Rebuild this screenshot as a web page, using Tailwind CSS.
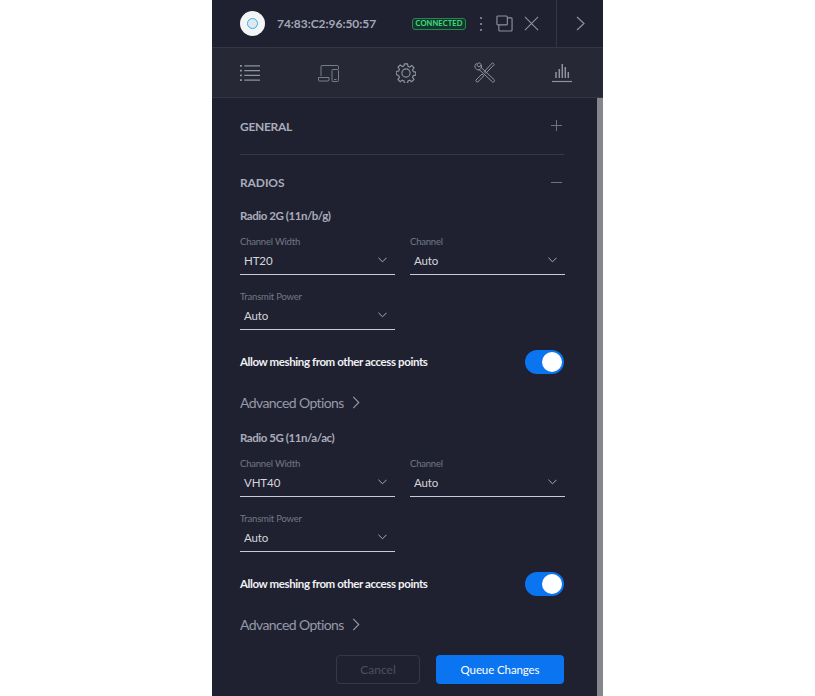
<!DOCTYPE html>
<html lang="en">
<head>
  <meta charset="UTF-8">
  <title>Device settings</title>
  <script src="https://cdn.jsdelivr.net/npm/@tailwindcss/browser@4"></script>
</head>
<body class="bg-white h-[696px] overflow-hidden font-['Lato',sans-serif]">
  <div class="ml-[212px] w-[391px] h-[696px] bg-[#1f2130] flex flex-col overflow-hidden">

    <!-- Header -->
    <div class="h-[48px] shrink-0 flex items-center border-b border-[#343645]">
      <div class="w-[25px] h-[25px] ml-[28px] rounded-full bg-[#f3f4f5] flex items-center justify-center">
        <div class="w-[11px] h-[11px] rounded-full border border-[#35b0e8] bg-[#dfe8ee]"></div>
      </div>
      <span class="ml-[12px] w-[124px] text-[12px] font-bold tracking-[-0.05px] text-[#a4a7b5]">74:83:C2:96:50:57</span>
      <span class="ml-[11px] mt-[1px] h-[12px] w-[54px] flex items-center justify-center rounded-[3px] border border-[#1f8a4c] bg-[#16352f] text-[7.5px] font-bold tracking-[0.1px] text-[#3fe07f]">CONNECTED</span>
      <svg class="ml-[13px]" width="4" height="16" viewBox="0 0 4 16" fill="#8d909e"><circle cx="2" cy="2" r="1.1"/><circle cx="2" cy="8" r="1.1"/><circle cx="2" cy="14" r="1.1"/></svg>
      <svg class="ml-[13px]" width="17" height="17" viewBox="0 0 18 18" fill="none" stroke="#8d909e" stroke-width="1.2"><rect x="1" y="1" width="11" height="9.5" rx="1"/><path d="M12 3h4a1 1 0 0 1 1 1v12a1 1 0 0 1-1 1H4a1 1 0 0 1-1-1v-5.500"/></svg>
      <svg class="ml-[11px]" width="15" height="15" viewBox="0 0 16 16" fill="none" stroke="#8d909e" stroke-width="1.2"><path d="M1 1l14 14M15 1L1 15"/></svg>
      <div class="ml-[17px] h-full w-px bg-[#343645]"></div>
      <svg class="ml-[19px]" width="9" height="15" viewBox="0 0 9 15" fill="none" stroke="#8d909e" stroke-width="1.2"><path d="M1 1l7 6.500L1 14"/></svg>
    </div>

    <!-- Tabs -->
    <div class="h-[50px] shrink-0 flex items-center bg-[#262836] border-b border-[#343645] text-[#8f92a0]">
      <svg class="ml-[28px]" width="20" height="18" viewBox="0 0 21 18" fill="none" stroke="currentColor" stroke-width="1.2"><path d="M4.500 1.500H21M4.500 6.500H21M4.500 11.500H21M4.500 16.500H21"/><path stroke-width="2" d="M0 1.500h2M0 6.500h2M0 11.500h2M0 16.500h2"/></svg>
      <svg class="ml-[58px]" width="21" height="18" viewBox="0 0 21 18" fill="none" stroke="currentColor" stroke-width="1" stroke-opacity=".8"><path d="M3 12V2.500a1 1 0 0 1 1-1h15.500a1 1 0 0 1 1 1V5"/><path d="M0.500 13.500H11v2.500a1 1 0 0 1-1 1H1.500a1 1 0 0 1-1-1z"/><rect x="14" y="5.500" width="6.500" height="12" rx="1"/><path d="M16 15.500h2.500"/></svg>
      <svg class="ml-[57px]" width="20" height="20" viewBox="0 0 22 22" fill="none" stroke="currentColor" stroke-width="1.3"><circle cx="11" cy="11" r="4.500"/><path d="M9.300 1h3.400l.5 2.700 1.900.8 2.300-1.600 2.400 2.400-1.600 2.300.8 1.900 2.700.5v3.400l-2.700.5-.8 1.900 1.600 2.300-2.400 2.400-2.300-1.600-1.900.8-.5 2.700H9.300l-.5-2.700-1.900-.8-2.300 1.600-2.400-2.400 1.600-2.300-.8-1.900L.300 12.700V9.300L3 8.800l.8-1.900-1.600-2.300 2.400-2.400 2.300 1.600 1.900-.8z"/></svg>
      <svg class="ml-[58px]" width="21" height="21" viewBox="0 0 21 21" fill="none" stroke="currentColor" stroke-width="1"><path d="M4.500 .8L2.800 3 4.800 5 7 3.300C7.800 5.500 6.800 7.800 4.600 7.800L5.500 7.800 18.500 20A1.500 1.500 0 0 0 20.300 17.800L7.500 5.800C7.800 2.800 6.500 .8 4.500 .8zM2.800 1.300C.8 2.300.2 4.800 1.700 6.500 2.800 7.800 4.200 8 5.500 7.800"/><path d="M18.500 .8L20.300 2.500 11.800 11.300 10.200 9.700zM8 12L2 18a1.500 1.500 0 0 0 1.800 2L9.800 13.800z"/></svg>
      <svg class="ml-[57px]" width="20" height="20" viewBox="0 0 20 20" fill="none" stroke="currentColor" stroke-width="1.5"><path d="M4 15V9M7.300 15V6M10.300 15V1M13.300 15V4M16.300 15V9"/><path stroke-width="1.200" d="M0 18.500h20"/></svg>
    </div>

    <!-- Scroll area -->
    <div class="flex-1 min-h-0 relative">
      <div class="absolute right-0 top-0 bottom-0 w-[6px] bg-[#85868b]"></div>
      <div class="pl-[28px] pr-[39px]">
        <div class="h-[57px] pt-[20px] border-b border-[#363847] flex justify-between">
          <span class="text-[12px] leading-[18px] font-bold tracking-[-0.3px] text-[#a9acbb]">GENERAL</span>
          <svg class="mt-[2px] mr-[2px]" width="11" height="11" viewBox="0 0 11 11" stroke="#6f7281" stroke-width="1"><path d="M5.500 0v11M0 5.500h11"/></svg>
        </div>
        <div class="h-[18px] mt-[19px] flex justify-between items-start">
          <span class="text-[12px] leading-[18px] font-bold tracking-[-0.1px] text-[#a9acbb]">RADIOS</span>
          <svg class="mt-[8px] mr-[2px]" width="11" height="1" viewBox="0 0 11 1" stroke="#6f7281" stroke-width="1"><path d="M0 .5h11"/></svg>
        </div>

        <!-- Radio 2G -->
        <div>
          <h3 class="h-[18px] mt-[15px] text-[11.500px] leading-[18px] font-bold tracking-[-0.45px] text-[#a9acbb]">Radio 2G (11n/b/g)</h3>
          <div class="mt-[9px] grid grid-cols-[155px_155px] gap-x-[15px] gap-y-[14px]">
            <div>
              <div class="h-[15px] pt-px text-[9.500px] leading-[14px] tracking-[-0.2px] text-[#747786]">Channel Width</div>
              <div class="h-[26px] pt-[3px] pl-[4px] pr-[8px] flex justify-between border-b border-[#c9cad2] text-[11.500px] leading-[18px] tracking-[-0.1px] text-[#d5d6dc]">HT20
                <svg class="mt-[5px]" width="9" height="6" viewBox="0 0 10 6" fill="none" stroke="#a9acbb" stroke-width="1.100"><path d="M.5.5L5 5 9.500.5"/></svg>
              </div>
            </div>
            <div>
              <div class="h-[15px] pt-px text-[9.500px] leading-[14px] tracking-[-0.2px] text-[#747786]">Channel</div>
              <div class="h-[26px] pt-[3px] pl-[4px] pr-[8px] flex justify-between border-b border-[#c9cad2] text-[11.500px] leading-[18px] tracking-[-0.1px] text-[#d5d6dc]">Auto
                <svg class="mt-[5px]" width="9" height="6" viewBox="0 0 10 6" fill="none" stroke="#a9acbb" stroke-width="1.100"><path d="M.5.5L5 5 9.500.5"/></svg>
              </div>
            </div>
            <div>
              <div class="h-[15px] pt-px text-[9.500px] leading-[14px] tracking-[-0.2px] text-[#747786]">Transmit Power</div>
              <div class="h-[26px] pt-[3px] pl-[4px] pr-[8px] flex justify-between border-b border-[#c9cad2] text-[11.500px] leading-[18px] tracking-[-0.1px] text-[#d5d6dc]">Auto
                <svg class="mt-[5px]" width="9" height="6" viewBox="0 0 10 6" fill="none" stroke="#a9acbb" stroke-width="1.100"><path d="M.5.5L5 5 9.500.5"/></svg>
              </div>
            </div>
          </div>
          <div class="mt-[20px] h-[24px] flex items-center justify-between">
            <span class="text-[11.500px] font-bold tracking-[-0.4px] text-[#f0f0f3]">Allow meshing from other access points</span>
            <div class="w-[39px] h-[24px] rounded-full bg-[#0b74f0] flex items-center justify-end pr-[2px]"><div class="w-[20px] h-[20px] rounded-full bg-white"></div></div>
          </div>
          <div class="mt-[18px] h-[20px] flex items-center text-[14px] tracking-[-0.6px] text-[#9699a8]">Advanced Options
            <svg class="ml-[8px]" width="8" height="13" viewBox="0 0 8 14" fill="none" stroke="#9699a8" stroke-width="1.200"><path d="M1 1l6 6-6 6"/></svg>
          </div>
        </div>

        <!-- Radio 5G -->
        <div>
          <h3 class="h-[18px] mt-[17px] text-[11.500px] leading-[18px] font-bold tracking-[-0.45px] text-[#a9acbb]">Radio 5G (11n/a/ac)</h3>
          <div class="mt-[9px] grid grid-cols-[155px_155px] gap-x-[15px] gap-y-[14px]">
            <div>
              <div class="h-[15px] pt-px text-[9.500px] leading-[14px] tracking-[-0.2px] text-[#747786]">Channel Width</div>
              <div class="h-[26px] pt-[3px] pl-[4px] pr-[8px] flex justify-between border-b border-[#c9cad2] text-[11.500px] leading-[18px] tracking-[-0.1px] text-[#d5d6dc]">VHT40
                <svg class="mt-[5px]" width="9" height="6" viewBox="0 0 10 6" fill="none" stroke="#a9acbb" stroke-width="1.100"><path d="M.5.5L5 5 9.500.5"/></svg>
              </div>
            </div>
            <div>
              <div class="h-[15px] pt-px text-[9.500px] leading-[14px] tracking-[-0.2px] text-[#747786]">Channel</div>
              <div class="h-[26px] pt-[3px] pl-[4px] pr-[8px] flex justify-between border-b border-[#c9cad2] text-[11.500px] leading-[18px] tracking-[-0.1px] text-[#d5d6dc]">Auto
                <svg class="mt-[5px]" width="9" height="6" viewBox="0 0 10 6" fill="none" stroke="#a9acbb" stroke-width="1.100"><path d="M.5.5L5 5 9.500.5"/></svg>
              </div>
            </div>
            <div>
              <div class="h-[15px] pt-px text-[9.500px] leading-[14px] tracking-[-0.2px] text-[#747786]">Transmit Power</div>
              <div class="h-[26px] pt-[3px] pl-[4px] pr-[8px] flex justify-between border-b border-[#c9cad2] text-[11.500px] leading-[18px] tracking-[-0.1px] text-[#d5d6dc]">Auto
                <svg class="mt-[5px]" width="9" height="6" viewBox="0 0 10 6" fill="none" stroke="#a9acbb" stroke-width="1.100"><path d="M.5.5L5 5 9.500.5"/></svg>
              </div>
            </div>
          </div>
          <div class="mt-[20px] h-[24px] flex items-center justify-between">
            <span class="text-[11.500px] font-bold tracking-[-0.4px] text-[#f0f0f3]">Allow meshing from other access points</span>
            <div class="w-[39px] h-[24px] rounded-full bg-[#0b74f0] flex items-center justify-end pr-[2px]"><div class="w-[20px] h-[20px] rounded-full bg-white"></div></div>
          </div>
          <div class="mt-[18px] h-[20px] flex items-center text-[14px] tracking-[-0.6px] text-[#9699a8]">Advanced Options
            <svg class="ml-[8px]" width="8" height="13" viewBox="0 0 8 14" fill="none" stroke="#9699a8" stroke-width="1.200"><path d="M1 1l6 6-6 6"/></svg>
          </div>
        </div>

        <!-- Actions -->
        <div class="mt-[21px] flex justify-end gap-[16px]">
          <button class="w-[84px] h-[29px] rounded-[4px] border border-[#363847] text-[12px] text-[#4d505e]">Cancel</button>
          <button class="w-[128px] h-[29px] rounded-[4px] bg-[#0b74f0] text-[11.500px] tracking-[-0.1px] text-white">Queue Changes</button>
        </div>
      </div>
    </div>
  </div>
</body>
</html>
